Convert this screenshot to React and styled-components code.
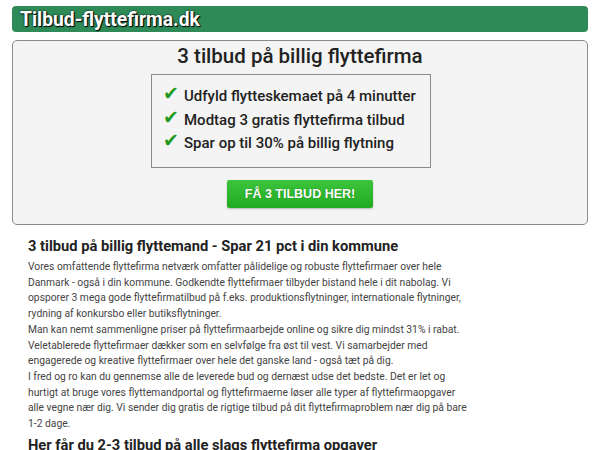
import React from 'react'
import { styled, createGlobalStyle } from 'styled-components'

const GlobalStyle = createGlobalStyle`
  *, *::before, *::after {
    box-sizing: border-box;
  }
  html, body {
    margin: 0;
    padding: 0;
    background: #fff;
  }
  body {
    font-family: Roboto, "Liberation Sans", Arial, sans-serif;
    color: #222;
  }
`;

const Page = styled.div`
  padding: 6px 12px 0 12px;
`;

const Header = styled.div`
  height: 26px;
  background: #2e8b57;
  border-radius: 4px;
  padding: 0 8px;
  display: flex;
  align-items: center;
`;

const Logo = styled.div`
  color: #fff;
  font-size: 19.3px;
  font-weight: 700;
  text-shadow: 1px 1px 1px #000, 0 0 2px #000;
`;

const Hero = styled.div`
  margin-top: 8px;
  background: #f4f4f4;
  border: 1px solid #8a8a8a;
  border-radius: 5px;
  height: 185px;
  display: flex;
  flex-direction: column;
  align-items: center;
`;

const HeroTitle = styled.h1`
  margin: 0;
  padding-top: 1px;
  font-size: 20.5px;
  font-weight: 500;
  color: #222;
  line-height: 28px;
`;

const CheckBox = styled.ul`
  list-style: none;
  margin: 4px 18px 0 0;
  padding: 10px 0 11px 11px;
  width: 280px;
  border: 1px solid #8a8a8a;
  display: flex;
  flex-direction: column;
`;

const CheckItem = styled.li`
  display: flex;
  align-items: center;
  white-space: nowrap;
  font-size: 15px;
  font-weight: 500;
  color: #222;
  line-height: 23.5px;
`;

const Tick = styled.span`
  color: #1f9a1f;
  font-size: 19px;
  width: 21px;
  font-family: "DejaVu Sans", sans-serif;
  transform: translateY(-3px);
`;

const CtaButton = styled.a`
  margin-top: 12px;
  width: 146px;
  height: 28px;
  display: flex;
  align-items: center;
  justify-content: center;
  background: linear-gradient(#3dc43d, #22aa22);
  border-radius: 2px;
  box-shadow: 0 1px 2px rgba(0, 0, 0, 0.25);
  color: #fff;
  font-family: "Liberation Sans", Arial, sans-serif;
  font-size: 12.5px;
  font-weight: 700;
  text-decoration: none;
  text-shadow: 0 0 1px rgba(0, 80, 0, 0.6);
`;

const Article = styled.div`
  padding: 11px 0 0 16px;
  width: 460px;
`;

const ArticleTitle = styled.h2`
  margin: 0;
  font-size: 14.7px;
  font-weight: 700;
  color: #222;
  line-height: 20px;
`;

const Para = styled.p`
  margin: 3px 0 0 0;
  font-size: 10.3px;
  line-height: 15.7px;
  color: #444;
`;

const SubTitle = styled.h2`
  margin: 3px 0 0 0;
  font-size: 14.7px;
  font-weight: 700;
  color: #222;
  line-height: 20px;
`;

const items = [
  'Udfyld flytteskemaet på 4 minutter',
  'Modtag 3 gratis flyttefirma tilbud',
  'Spar op til 30% på billig flytning',
];

export default function App() {
  return (
    <>
      <GlobalStyle />
      <Page>
        <Header>
          <Logo>Tilbud-flyttefirma.dk</Logo>
        </Header>
        <Hero>
          <HeroTitle>3 tilbud på billig flyttefirma</HeroTitle>
          <CheckBox>
            {items.map((t) => (
              <CheckItem key={t}>
                <Tick>✔</Tick>
                {t}
              </CheckItem>
            ))}
          </CheckBox>
          <CtaButton href="#">FÅ 3 TILBUD HER!</CtaButton>
        </Hero>
        <Article>
          <ArticleTitle>3 tilbud på billig flyttemand - Spar 21 pct i din kommune</ArticleTitle>
          <Para>
            Vores omfattende flyttefirma netværk omfatter pålidelige og robuste flyttefirmaer over hele
            Danmark - også i din kommune. Godkendte flyttefirmaer tilbyder bistand hele i dit nabolag. Vi
            opsporer 3 mega gode flyttefirmatilbud på f.eks. produktionsflytninger, internationale flytninger,
            rydning af konkursbo eller butiksflytninger.
            <br />
            Man kan nemt sammenligne priser på flyttefirmaarbejde online og sikre dig mindst 31% i rabat.
            Veletablerede flyttefirmaer dækker som en selvfølge fra øst til vest. Vi samarbejder med
            engagerede og kreative flyttefirmaer over hele det ganske land - også tæt på dig.
            <br />
            I fred og ro kan du gennemse alle de leverede bud og dernæst udse det bedste. Det er let og
            hurtigt at bruge vores flyttemandportal og flyttefirmaerne løser alle typer af flyttefirmaopgaver
            alle vegne nær dig. Vi sender dig gratis de rigtige tilbud på dit flyttefirmaproblem nær dig på bare
            1-2 dage.
          </Para>
          <SubTitle>Her får du 2-3 tilbud på alle slags flyttefirma opgaver</SubTitle>
        </Article>
      </Page>
    </>
  )
}
